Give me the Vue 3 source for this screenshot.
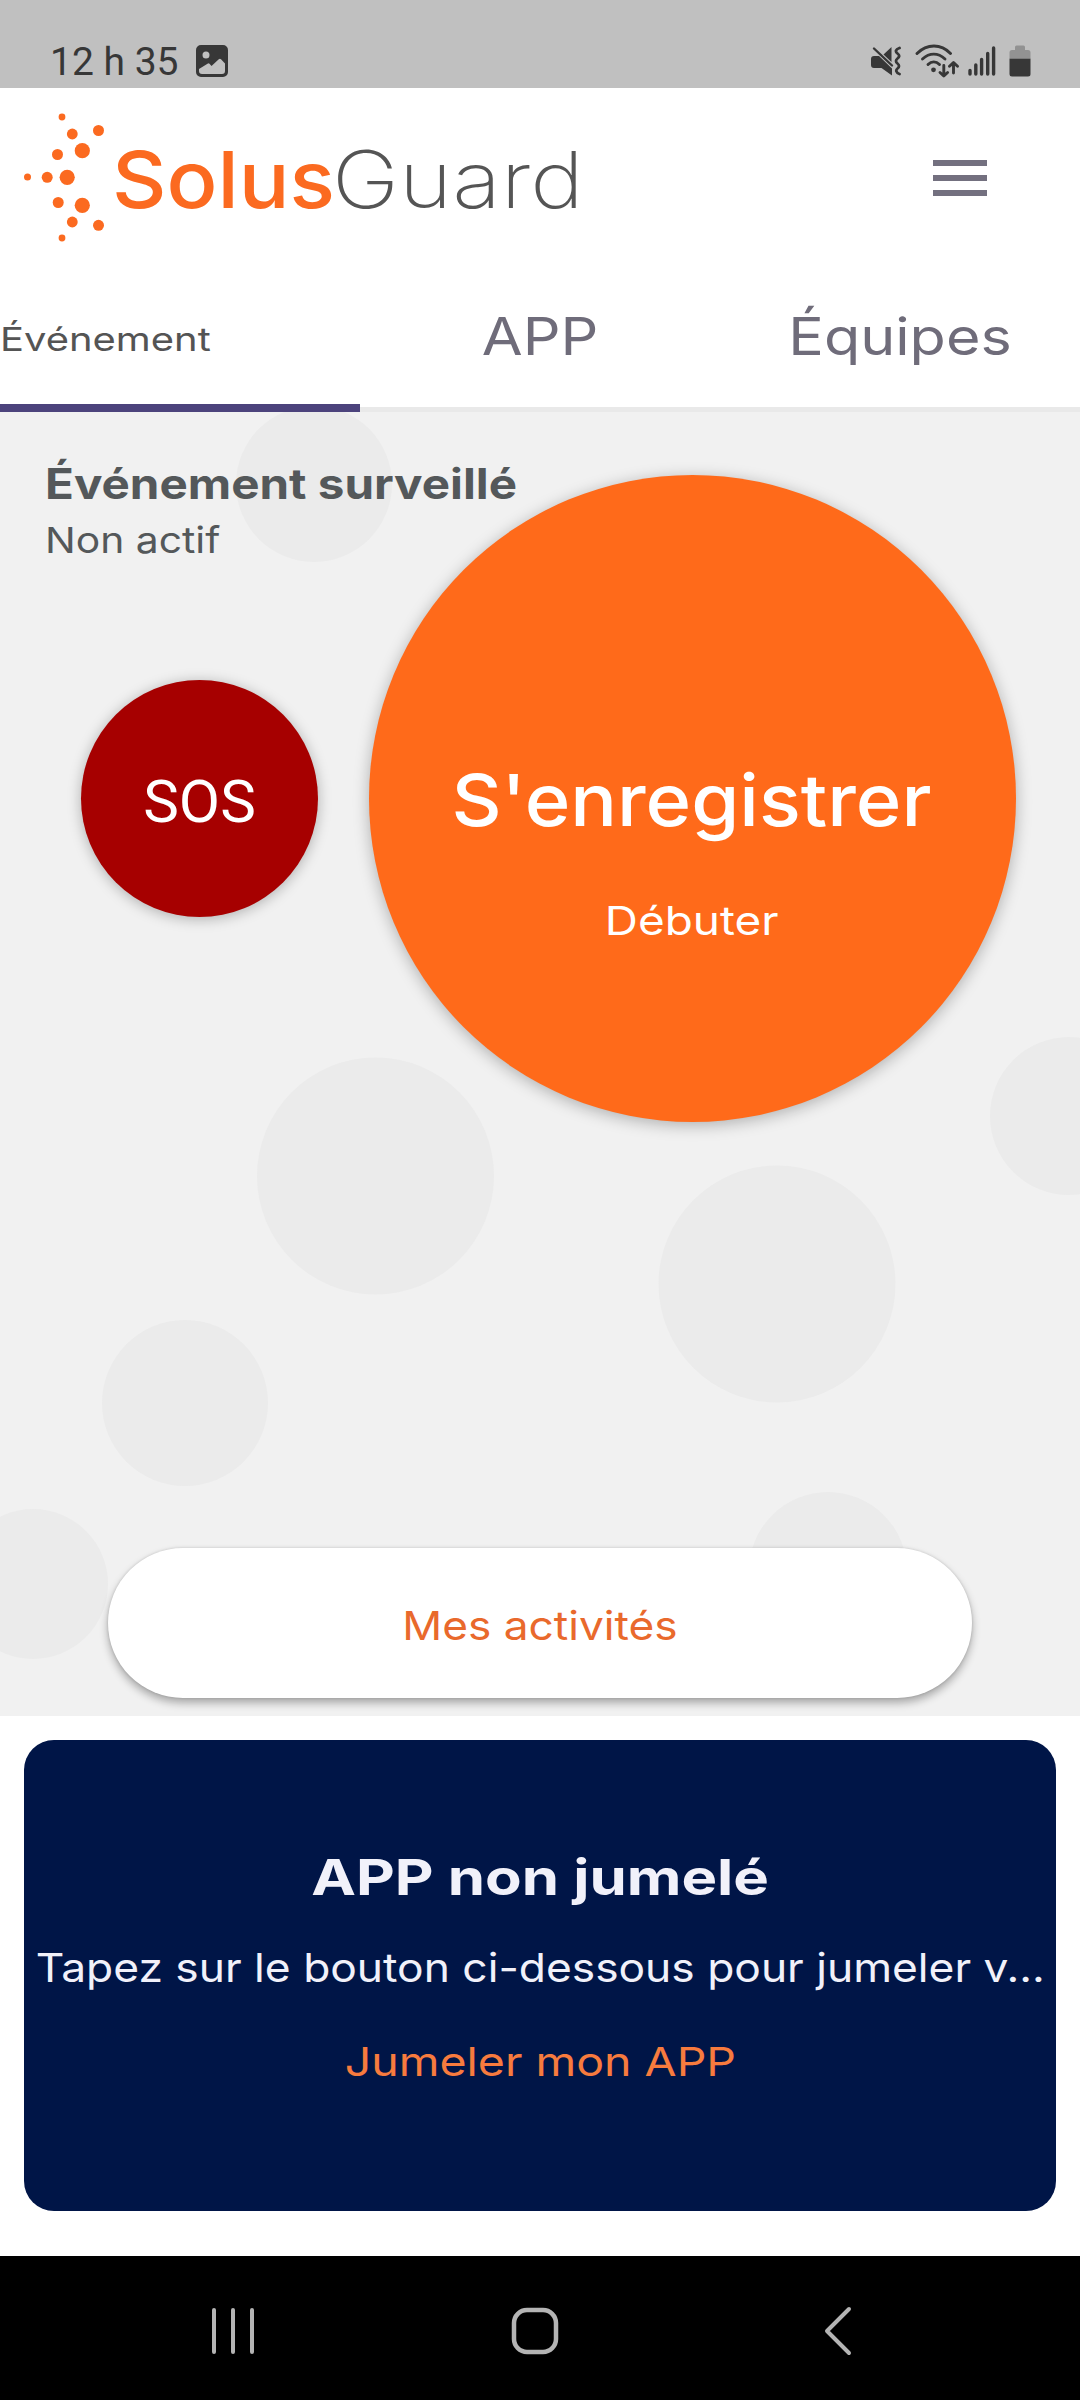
<template>
  <div class="screen">
    <!-- Barre d'état -->
    <div class="status-bar">
      <div class="status-left">
        <span class="clock">12 h 35</span>
        <svg class="icon-picture" viewBox="0 0 32 32">
          <path
            fill="#373737"
            fill-rule="evenodd"
            d="M5 0h22a5 5 0 0 1 5 5v22a5 5 0 0 1-5 5H5a5 5 0 0 1-5-5V5a5 5 0 0 1 5-5zM10 6.500a3.500 3.500 0 1 0 0 7 3.500 3.500 0 0 0 0-7zM3 24v2a3 3 0 0 0 3 3h20a3 3 0 0 0 3-3v-7.500l-4-4.200a1.500 1.500 0 0 0-2.200 0L15.500 21l-2-2.300a1.400 1.400 0 0 0-2 0z"
          />
        </svg>
      </div>
      <div class="status-right">
        <svg class="icon-mute" viewBox="0 0 30 31">
          <path fill="#373737" d="M3 10h5l13 12.500V29.500L10.500 22H3a3 3 0 0 1-3-3v-6a3 3 0 0 1 3-3zM20.500 1v15L12.500 8.500z" />
          <path d="M3 2.500L21 19.500" fill="none" stroke="#373737" stroke-width="2.400" stroke-linecap="round" />
          <path
            d="M28.500 2c-4 1.500-4.500 3.500-2 5.500s2 3.500 0 5-2 3.500 0 5 2 3.500 0 5-1.500 4.500 2 5.500"
            fill="none"
            stroke="#373737"
            stroke-width="2.800"
            stroke-linecap="round"
          />
        </svg>
        <svg class="icon-wifi" viewBox="0 0 44 34">
          <g fill="none" stroke="#373737" stroke-width="2.900" stroke-linecap="round" stroke-linejoin="round">
            <path d="M2 9.500C12 -.5 26 -.5 35.500 9.500" />
            <path d="M7.500 15C14.500 8.500 23 8.500 30 15" />
            <path d="M13 20.500C16.500 17 21 17 24.500 20.500" />
            <path d="M28.800 21.500v10M25 28.500l3.800 3.500 3.800-3.500" />
            <path d="M38.500 29V19M34.500 22.300l4-3.800 4 3.800" />
          </g>
          <circle cx="18.500" cy="25.800" r="2.400" fill="#373737" />
        </svg>
        <svg class="icon-signal" viewBox="0 0 28 30">
          <g stroke="#373737" stroke-width="3.400" stroke-linecap="round">
            <path d="M2 28V24.500M7.800 28V19M13.600 28V13.500M19.700 28V7.500M25.600 28V2" />
          </g>
        </svg>
        <svg class="icon-battery" viewBox="0 0 22 32">
          <path fill="#929292" d="M6 2a1.500 1.500 0 0 1 1.500-1.500h7A1.500 1.500 0 0 1 16 2v3h3a2.500 2.500 0 0 1 2.500 2.500V14H.5V7.500A2.500 2.500 0 0 1 3 5h3z" />
          <path fill="#373737" d="M.5 13.800h21V29a2.500 2.500 0 0 1-2.500 2.500H3A2.500 2.500 0 0 1 .5 29z" />
        </svg>
      </div>
    </div>

    <!-- En-tête : logo et menu -->
    <header class="header">
      <div class="logo">
        <svg class="logo-dots" viewBox="0 0 84 130">
          <circle v-for="(dot, i) in logoDots" :key="i" :cx="dot[0]" :cy="dot[1]" :r="dot[2]" fill="#fb6a20" />
        </svg>
        <span class="logo-solus">Solus</span>
        <span class="logo-guard">Guard</span>
      </div>
      <button class="menu-button" aria-label="Menu">
        <span></span>
        <span></span>
        <span></span>
      </button>
    </header>

    <!-- Onglets -->
    <nav class="tabs">
      <div
        v-for="tab in tabs"
        :key="tab.id"
        class="tab"
        :class="{ active: tab.id === activeTab }"
        @click="activeTab = tab.id"
      >
        <span class="tab-label">{{ tab.name }}</span>
      </div>
    </nav>

    <!-- Zone principale -->
    <main class="monitor">
      <svg class="bubbles" viewBox="0 0 1080 1304">
        <circle v-for="(b, i) in bubbles" :key="i" :cx="b.x" :cy="b.y" :r="b.r" fill="#ebebeb" />
      </svg>
      <div class="event">
        <span class="event-title">Événement surveillé</span>
        <span class="event-status">Non actif</span>
      </div>
      <div class="actions">
        <button class="sos"><span class="sos-label">SOS</span></button>
        <button class="checkin">
          <span class="checkin-title">S'enregistrer</span>
          <span class="checkin-sub">Débuter</span>
        </button>
      </div>
      <button class="activities"><span class="activities-label">Mes activités</span></button>
    </main>

    <!-- Jumelage -->
    <section class="pairing">
      <div class="pairing-card">
        <span class="pairing-title">APP non jumelé</span>
        <span class="pairing-text">Tapez sur le bouton ci-dessous pour jumeler v...</span>
        <span class="pairing-link">Jumeler mon APP</span>
      </div>
    </section>

    <!-- Navigation système -->
    <footer class="system-nav">
      <svg class="nav-recents" viewBox="0 0 44 50">
        <path d="M3 4v42M22 4v42M41 4v42" fill="none" stroke="#b4b4b4" stroke-width="4" stroke-linecap="round" />
      </svg>
      <svg class="nav-home" viewBox="0 0 50 50">
        <rect x="4" y="4" width="42" height="42" rx="13" fill="none" stroke="#b4b4b4" stroke-width="4.500" />
      </svg>
      <svg class="nav-back" viewBox="0 0 30 50">
        <path d="M26 3L4 25l22 22" fill="none" stroke="#b4b4b4" stroke-width="4" stroke-linecap="round" stroke-linejoin="round" />
      </svg>
    </footer>
  </div>
</template>

<script setup>
import { ref } from 'vue'

const tabs = ref([
  { id: 1, name: 'Événement' },
  { id: 2, name: 'APP' },
  { id: 3, name: 'Équipes' }
])

const activeTab = ref(1)

// x, y, rayon
const logoDots = [
  [39, 6, 3.4],
  [49.3, 23, 5.4],
  [75.5, 19.5, 5.5],
  [34.5, 43.5, 5.5],
  [59.3, 39.7, 7.6],
  [4.5, 66, 3.5],
  [24.2, 66.3, 5.5],
  [44.2, 66.3, 7.6],
  [35.2, 91.5, 5.5],
  [59.3, 94.3, 7.6],
  [49.3, 111, 5.4],
  [75.5, 114.3, 5.5],
  [39, 127, 3.4]
]

const bubbles = [
  { x: 314, y: 72, r: 78 },
  { x: 375.5, y: 764, r: 118.5 },
  { x: 777, y: 872, r: 118.5 },
  { x: 1069, y: 704, r: 79 },
  { x: 185, y: 991, r: 83 },
  { x: 33, y: 1172, r: 75 },
  { x: 828, y: 1159, r: 79 }
]
</script>

<style>
body {
  margin: 0;
  background: #fff;
}
</style>

<style scoped>
.screen {
  display: flex;
  flex-direction: column;
  width: 1080px;
  height: 2400px;
  overflow: hidden;
  background: #fff;
  font-family: Inter, "Liberation Sans", sans-serif;
  font-weight: 400;
}

.screen span {
  display: block;
  white-space: nowrap;
}

button {
  border: none;
  padding: 0;
  font: inherit;
}

.status-bar {
  display: flex;
  justify-content: space-between;
  box-sizing: border-box;
  height: 88px;
  padding: 34px 49px 0 50px;
  background: #c0c0c0;
}

.status-left,
.status-right {
  display: flex;
  align-items: center;
  height: 54px;
}

.clock {
  padding-top: 1px;
  color: #373737;
  font-family: Roboto, sans-serif;
  font-size: 39px;
}

.icon-picture {
  width: 32px;
  height: 32px;
  margin-left: 17px;
}

.icon-mute {
  width: 30px;
  height: 31px;
}

.icon-wifi {
  width: 44px;
  height: 34px;
  margin-left: 14px;
}

.icon-signal {
  width: 28px;
  height: 30px;
  margin-left: 9px;
}

.icon-battery {
  width: 22px;
  height: 32px;
  margin-left: 13px;
}

.header {
  display: flex;
  align-items: center;
  justify-content: space-between;
  height: 182px;
  padding: 0 93px 0 23px;
}

.logo {
  display: flex;
  align-items: center;
  font-size: 79px;
}

.logo-dots {
  width: 84px;
  height: 130px;
  margin: 0 5px 6px 0;
  overflow: visible;
}

.logo-solus {
  width: 220px;
  color: #fb6a20;
  font-weight: 500;
  transform: scaleX(1.068);
  transform-origin: left;
}

.logo-guard {
  color: #555;
  font-weight: 200;
  transform: scaleX(1.146);
  transform-origin: left;
}

.menu-button {
  display: flex;
  flex-direction: column;
  gap: 9px;
  width: 54px;
  margin-bottom: 2px;
  background: none;
}

.menu-button span {
  height: 6px;
  background: #73707f;
}

.tabs {
  display: grid;
  grid-template-columns: repeat(3, 1fr);
  height: 142px;
}

.tab {
  display: flex;
  align-items: center;
  justify-content: center;
  box-sizing: border-box;
  padding-bottom: 5px;
  border-bottom: 5px solid #e9e9e9;
  color: #6f6c7a;
  font-size: 52px;
}

.tab-label {
  transform: scaleX(1.14);
}

.tab.active {
  justify-content: flex-start;
  padding-bottom: 0;
  border-bottom: 8px solid #4c437c;
  color: #545454;
  font-size: 33px;
}

.tab.active .tab-label {
  margin-top: 4px;
  transform: scaleX(1.21);
  transform-origin: left;
}

.monitor {
  position: relative;
  display: flex;
  flex-direction: column;
  height: 1304px;
  background: #f1f1f1;
}

.bubbles {
  position: absolute;
  inset: 0;
  width: 1080px;
  height: 1304px;
}

.event {
  position: relative;
  height: 62px;
  padding: 44px 0 0 45px;
  color: #54585a;
  line-height: 56px;
}

.event-title {
  font-size: 42px;
  font-weight: 700;
  transform: scaleX(1.132);
  transform-origin: left;
}

.event-status {
  font-size: 36px;
  transform: scaleX(1.133);
  transform-origin: left;
}

.actions {
  position: relative;
  display: flex;
  align-items: center;
  height: 561px;
}

.sos {
  width: 237px;
  height: 237px;
  margin-left: 81px;
  border-radius: 50%;
  background: #a60000;
  color: #fff;
  font-family: Roboto, sans-serif;
  font-size: 60px;
  box-shadow: 0 2px 14px rgba(0, 0, 0, 0.28);
}

.sos-label {
  padding-top: 6px;
}

.checkin {
  display: flex;
  flex-direction: column;
  align-items: center;
  box-sizing: border-box;
  width: 647px;
  height: 647px;
  margin-left: 51px;
  padding: 275px 2px 0 0;
  border-radius: 50%;
  background: #ff6a1a;
  color: #fff;
  box-shadow: 0 3px 16px rgba(0, 0, 0, 0.28);
}

.checkin-title {
  font-size: 72px;
  font-weight: 500;
  line-height: 100px;
  transform: scaleX(1.079);
}

.checkin-sub {
  margin-top: 41px;
  font-size: 40px;
  line-height: 60px;
  transform: scaleX(1.147);
}

.activities {
  position: relative;
  width: 864px;
  height: 150px;
  margin: auto 108px 18px;
  border-radius: 75px;
  background: #fff;
  color: #e9692c;
  font-size: 40px;
  box-shadow: 0 5px 9px rgba(0, 0, 0, 0.3), 0 0 3px rgba(0, 0, 0, 0.15);
}

.activities-label {
  padding-top: 4px;
  transform: scaleX(1.105);
}

.pairing {
  height: 540px;
}

.pairing-card {
  display: flex;
  flex-direction: column;
  align-items: center;
  box-sizing: border-box;
  height: 471px;
  margin: 24px 24px 0;
  padding-top: 97px;
  border-radius: 30px;
  background: #001547;
  color: #f1f1fa;
  font-size: 40px;
}

.pairing-title {
  font-size: 50px;
  font-weight: 700;
  line-height: 80px;
  transform: scaleX(1.198);
}

.pairing-text {
  margin-top: 21px;
  line-height: 60px;
  transform: scaleX(1.108);
}

.pairing-link {
  margin-top: 34px;
  color: #f77b3e;
  line-height: 60px;
  transform: scaleX(1.162);
}

.system-nav {
  display: flex;
  align-items: center;
  box-sizing: border-box;
  height: 144px;
  padding: 6px 0 0 211px;
  background: #000;
}

.nav-recents {
  width: 44px;
  height: 50px;
}

.nav-home {
  width: 50px;
  height: 50px;
  margin-left: 255px;
}

.nav-back {
  width: 30px;
  height: 50px;
  margin-left: 263px;
}
</style>
